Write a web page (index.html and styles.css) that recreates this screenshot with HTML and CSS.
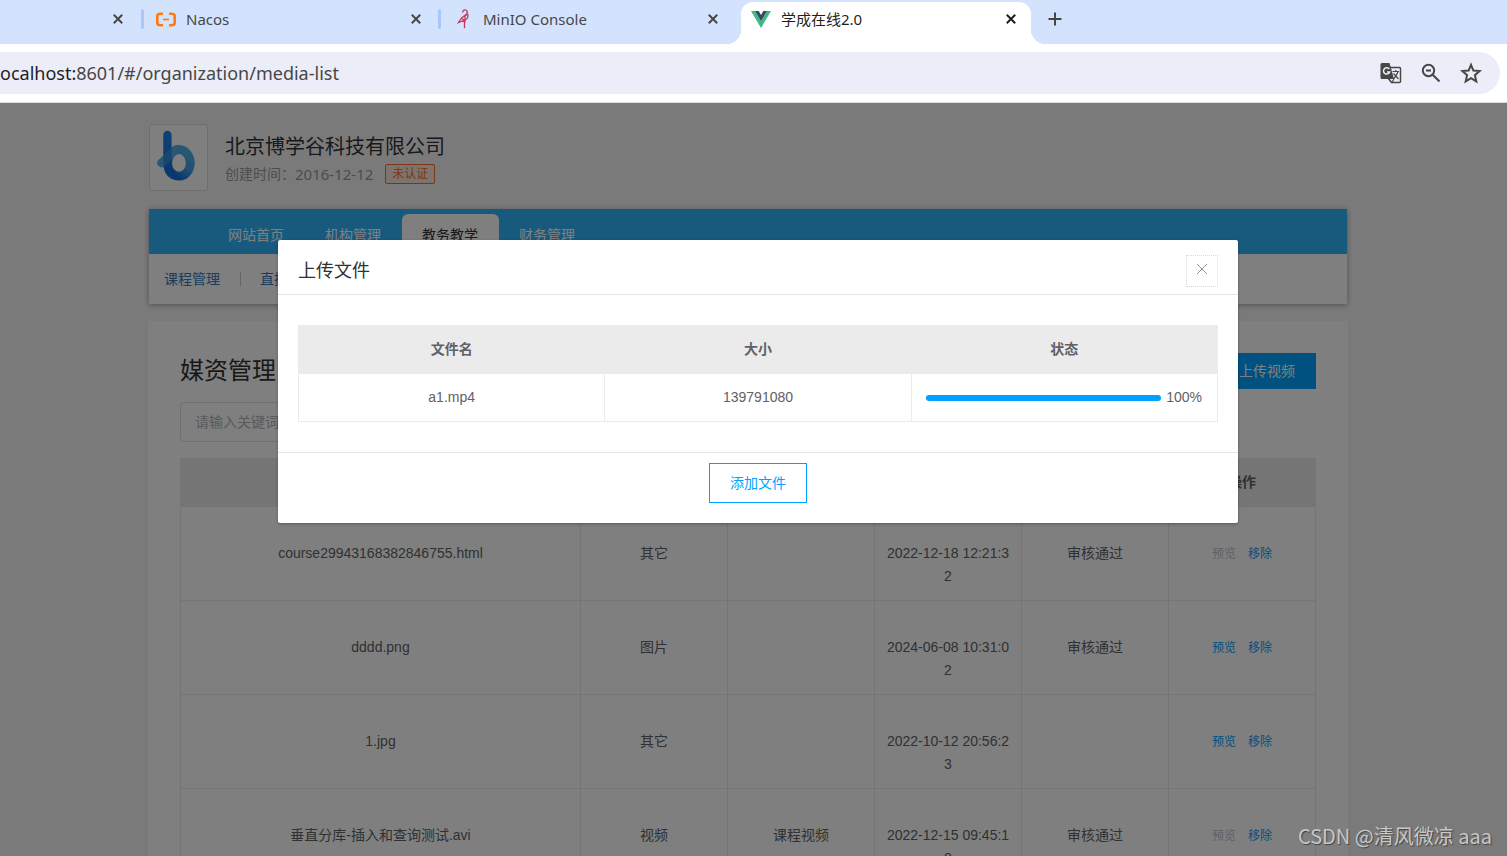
FILE: index.html
```html
<!DOCTYPE html>
<html lang="zh-CN">
<head>
<meta charset="utf-8">
<title>学成在线2.0</title>
<link rel="stylesheet" href="styles.css">
</head>
<body>
<header class="browser">
  <div class="tabs">
    <div class="tab tab-cut"><button class="tab-close" aria-label="关闭"><svg viewBox="0 0 10 10"><path d="M0.8 0.8 9.2 9.2M9.2 0.8 0.8 9.2"/></svg></button></div>
    <div class="tab">
      <svg class="favicon wide" viewBox="0 0 20 14"><path d="M7 1.300H4.500Q1.300 1.300 1.300 3.500v7Q1.300 12.700 4.500 12.700H7M13 1.300h2.500q3.200 0 3.200 2.200v7q0 2.200-3.200 2.200H13" fill="none" stroke="#ff7a0f" stroke-width="2.600"/><path d="M7 7h6" stroke="#ff7a0f" stroke-width="1.600"/></svg>
      <span class="tab-title">Nacos</span>
      <button class="tab-close" aria-label="关闭"><svg viewBox="0 0 10 10"><path d="M0.8 0.8 9.2 9.2M9.2 0.8 0.8 9.2"/></svg></button>
    </div>
    <div class="tab">
      <svg class="favicon" viewBox="0 0 16 20"><path d="M7.500 3.500Q8.500-.2 11.500 1.500q2 2-.8 4.200L6.500 9l3.500 3V6.500l2.800-1Q13.500 9 11 10.500L3.500 13.500 6.500 9M9.500 11v8.200" fill="none" stroke="#c9375c" stroke-width="1.300"/></svg>
      <span class="tab-title">MinIO Console</span>
      <button class="tab-close" aria-label="关闭"><svg viewBox="0 0 10 10"><path d="M0.8 0.8 9.2 9.2M9.2 0.8 0.8 9.2"/></svg></button>
    </div>
    <div class="tab tab-active">
      <svg class="favicon wide" viewBox="0 0 20 17"><path d="M0 0h4l6 10.300L16 0h4L10 17z" fill="#41b883"/><path d="M4 0h3.700L10 4l2.300-4H16l-6 10.300z" fill="#34495e"/></svg>
      <span class="tab-title">学成在线2.0</span>
      <button class="tab-close" aria-label="关闭"><svg viewBox="0 0 10 10"><path d="M0.8 0.8 9.2 9.2M9.2 0.8 0.8 9.2"/></svg></button>
    </div>
    <button class="tab-new" aria-label="新标签页"><svg viewBox="0 0 14 14"><path d="M7 .5v13M.5 7h13"/></svg></button>
  </div>
  <div class="toolbar">
    <div class="omnibox">
      <span class="url"><b>ocalhost:</b>8601/#/organization/media-list</span>
      <button aria-label="翻译"><svg viewBox="0 0 22 22"><path d="M10 5.500h9.500q1 0 1 1v13q0 1-1 1h-8L8 16" fill="none" stroke="#474747" stroke-width="1.500"/><path d="M2 1h7.500l4.500 16H2q-1.500 0-1.500-1.500v-13Q.5 1 2 1z" fill="#474747"/><path d="M9.300 7A3.200 3.200 0 1 0 9.700 10H7" fill="none" stroke="#ebedf8" stroke-width="1.500"/><path d="M12.500 9.500h6.500M15.700 8v1.500M18 9.500q-1.500 5-4.500 7.500M13.500 11.500l5 5.500M11.500 21l2.500-4" fill="none" stroke="#474747" stroke-width="1.200"/></svg></button>
      <button aria-label="缩小"><svg viewBox="0 0 22 22"><circle cx="8.500" cy="8.500" r="5.700" fill="none" stroke="#474747" stroke-width="2"/><path d="M6 8.500h5M12.700 12.700l6.800 6.800" stroke="#474747" stroke-width="2"/></svg></button>
      <button aria-label="收藏"><svg viewBox="0 0 22 22"><path d="M11 2.800 13.400 8.600l6.200.5-4.700 4.100 1.400 6.100-5.300-3.200-5.300 3.200 1.400-6.100L2.400 9.100l6.200-.5z" fill="none" stroke="#474747" stroke-width="2"/></svg></button>
    </div>
  </div>
</header>

<div class="viewport">
  <main class="page">
    <section class="org">
      <svg class="org-logo" viewBox="0 0 58 66" role="img" aria-label="logo">
        <defs>
          <linearGradient id="g1" x1="0" y1="0" x2="0" y2="1"><stop offset="0" stop-color="#1c86e6"/><stop offset="1" stop-color="#0f6fdc"/></linearGradient>
          <linearGradient id="g2" gradientUnits="userSpaceOnUse" x1="40" y1="30" x2="26" y2="52"><stop offset="0" stop-color="#4fb0e4"/><stop offset=".5" stop-color="#41a0e2"/><stop offset="1" stop-color="#0f6fdc"/></linearGradient>
        </defs>
        <ellipse cx="29.500" cy="38.500" rx="11.500" ry="13.500" fill="none" stroke="url(#g2)" stroke-width="9"/>
        <path d="M13.500 10a4.200 4.200 0 0 1 8.500 0V38.500Q22 46 26 48L22 55Q13.500 50 13.500 38z" fill="url(#g1)"/>
        <path d="M8 36 21 24Q25 20 30 20V29.500Q26 29.500 23 33.500L14 42.500A4.600 4.600 0 0 1 8 36z" fill="#58aee4"/>
        <path d="M13.500 31 21 24 22 23.200V34.500L14 42.500 13.500 42.800z" fill="#2f8fdc"/>
      </svg>
      <div class="org-info">
        <h2>北京博学谷科技有限公司</h2>
        <p>创建时间：<time>2016-12-12</time><span class="tag">未认证</span></p>
      </div>
    </section>
    <nav class="nav">
      <div class="nav-main"><a href="#">网站首页</a><a href="#">机构管理</a><a href="#" class="on">教务教学</a><a href="#">财务管理</a></div>
      <div class="nav-sub"><a href="#">课程管理</a><a href="#">直播</a></div>
    </nav>
    <section class="card">
      <div class="card-head"><h1>媒资管理</h1><button class="primary">上传视频</button></div>
      <input class="search" type="text" placeholder="请输入关键词" aria-label="请输入关键词">
      <table class="grid media">
        <colgroup><col class="col-name"><col><col><col><col><col></colgroup>
        <thead><tr><th></th><th></th><th></th><th></th><th></th><th>操作</th></tr></thead>
        <tbody>
          <tr><td>course29943168382846755.html</td><td>其它</td><td></td><td class="date">2022-12-18 12:21:32</td><td>审核通过</td><td class="ops"><a class="off">预览</a><a href="#">移除</a></td></tr>
          <tr><td>dddd.png</td><td>图片</td><td></td><td class="date">2024-06-08 10:31:02</td><td>审核通过</td><td class="ops"><a href="#">预览</a><a href="#">移除</a></td></tr>
          <tr><td>1.jpg</td><td>其它</td><td></td><td class="date">2022-10-12 20:56:23</td><td></td><td class="ops"><a href="#">预览</a><a href="#">移除</a></td></tr>
          <tr><td>垂直分库-插入和查询测试.avi</td><td>视频</td><td>课程视频</td><td class="date">2022-12-15 09:45:18</td><td>审核通过</td><td class="ops"><a class="off">预览</a><a href="#">移除</a></td></tr>
        </tbody>
      </table>
    </section>
  </main>
  <div class="mask">
    <div class="dialog" role="dialog" aria-labelledby="dlg-title">
      <div class="dialog-head"><h3 id="dlg-title">上传文件</h3><button class="close" aria-label="关闭"><svg viewBox="0 0 12 12"><path d="M1 1 11 11M11 1 1 11"/></svg></button></div>
      <div class="dialog-body">
        <table class="grid">
          <thead><tr><th>文件名</th><th>大小</th><th>状态</th></tr></thead>
          <tbody><tr><td>a1.mp4</td><td>139791080</td><td><div class="progress"><div class="track"><div class="bar" style="width:100%"></div></div><span>100%</span></div></td></tr></tbody>
        </table>
      </div>
      <div class="dialog-foot"><button class="outline">添加文件</button></div>
    </div>
  </div>
  <div class="watermark">CSDN @清风微凉 aaa</div>
</div>
</body>
</html>
```
FILE: styles.css
```css
* { box-sizing: border-box; }
body {
  margin: 0;
  height: 100vh;
  display: flex;
  flex-direction: column;
  overflow: hidden;
  font: 14px/23px "Liberation Sans", "Noto Sans CJK SC", sans-serif;
  color: #606266;
}
h1, h2, h3, p { margin: 0; font-weight: 400; }
button, input { font: inherit; }
button { padding: 0; border: 0; background: none; cursor: pointer; }
a { text-decoration: none; color: inherit; }
svg { display: block; }

/* browser frame */
.browser { flex: none; font-family: "Noto Sans", "Noto Sans CJK SC", sans-serif; background: #fff; border-bottom: 1px solid #dcdcdc; }
.tabs { display: flex; height: 44px; background: #d3e3fd; }
.tab { position: relative; display: flex; align-items: center; gap: 10px; flex: none; width: 297px; height: 38px; padding: 0 19px 0 13px; font-size: 15px; color: #474747; }
.tab + .tab:not(.tab-active)::before { content: ""; position: absolute; left: -2px; top: 9px; width: 3px; height: 20px; border-radius: 2px; background: #a8c7fa; }
.tab-cut { width: 143px; padding-right: 20px; }
.tab-title { flex: 1; }
.favicon { width: 20px; height: 20px; }
.favicon.wide { height: 17px; }
.tab-close { margin-left: auto; color: #474747; }
.tab-close svg { width: 10px; height: 10px; fill: none; stroke: currentColor; stroke-width: 2; }
.tab-active { width: 290px; height: 42px; margin: 2px 0 0 4px; padding: 0 15px 8px 10px; border-radius: 12px 12px 0 0; background: #fff; color: #1f1f1f; }
.tab-active .tab-close { color: #1f1f1f; }
.tab-active::before, .tab-active::after { content: ""; position: absolute; bottom: 0; width: 14px; height: 14px; }
.tab-active::before { right: 100%; background: radial-gradient(circle at 0 0, transparent 14px, #fff 14px); }
.tab-active::after { left: 100%; background: radial-gradient(circle at 100% 0, transparent 14px, #fff 14px); }
.tab-new { height: 38px; padding-left: 17px; }
.tab-new svg { width: 14px; height: 14px; fill: none; stroke: #474747; stroke-width: 2; }
.toolbar { padding: 8px 7px 8px 0; }
.omnibox { display: flex; align-items: center; gap: 18px; height: 42px; padding-right: 18px; border-radius: 0 21px 21px 0; background: #ebedf8; }
.url { flex: 1; font-size: 18px; color: #474747; }
.url b { font-weight: 400; color: #1f1f1f; }
.omnibox svg { width: 22px; height: 22px; }

/* page */
.viewport { position: relative; flex: 1; min-height: 0; overflow: hidden; background: #f5f5f5; }
.page { max-width: 1211px; margin: 0 auto; padding: 21px 11px 0 0; }
.org { display: flex; gap: 17px; margin-left: 1px; }
.org-logo { width: 59px; height: 67px; border: 1px solid #dcdcdc; border-radius: 3px; background: #fff; }
.org-info { padding-top: 9px; }
.org h2 { font-size: 20px; line-height: 28px; color: #333; }
.org p { display: flex; align-items: center; line-height: 26px; color: #999; }
.org time { font: 15px/26px "Noto Sans", sans-serif; }
.tag { margin-left: 12px; padding: 0 6px; border: 1px solid #ff6a1a; border-radius: 2px; background: #fbe9df; font-size: 12px; line-height: 18px; color: #ff6a1a; }
.nav { margin: 18px 1px 0; background: #fff; box-shadow: 0 1px 6px rgba(0, 0, 0, .35); }
.nav-main { display: flex; align-items: flex-end; height: 45px; padding-left: 59px; background: #2eb4fc; color: #fff; }
.nav-main a { height: 40px; padding: 0 20px; border-right: 1px solid transparent; line-height: 42px; }
.nav-main .on { border-radius: 6px 6px 0 0; background: #fff; color: #333; }
.nav-sub { display: flex; align-items: center; height: 50px; padding-left: 15px; color: #337ab7; }
.nav-sub a { display: flex; align-items: center; }
.nav-sub a + a::before { content: ""; height: 14px; margin: 0 19px 0 20px; border-left: 1px solid #ccc; }
.card { margin-top: 17px; padding: 32px; background: #fff; }
.card-head { display: flex; align-items: center; justify-content: space-between; height: 36px; }
.card h1 { font-size: 24px; line-height: 36px; color: #333; }
.primary { height: 36px; padding: 0 21px; background: #00a2ff; color: #fff; }
.search { display: block; width: 240px; height: 40px; margin: 13px 0 16px; padding: 0 14px; border: 1px solid #dcdfe6; border-radius: 4px; background: #fff; }
.search::placeholder { color: #b0b3ba; opacity: 1; }

/* tables */
.grid { width: 100%; table-layout: fixed; border-collapse: collapse; text-align: center; word-break: break-all; }
.grid th { height: 48px; padding: 0 10px; border: 1px solid #ebebeb; background: #ebebeb; font-weight: 700; }
.grid td { height: 48px; padding: 12px 10px; border: 1px solid #ebebeb; }
.media { color: #606266; }
.media .col-name { width: 400px; }
.media td { height: 94px; }
.media .date { padding-top: 35px; }
.ops a { font-size: 12px; color: #00a2ff; }
.ops a + a { margin-left: 12px; }
.ops .off { color: #c0c4cc; }

/* dialog */
.mask { position: absolute; inset: 0; padding: 137px 0 0 9px; background: rgba(0, 0, 0, .5); }
.dialog { width: 100%; max-width: 960px; margin: 0 auto; border-radius: 2px; background: #fff; box-shadow: 0 1px 3px rgba(0, 0, 0, .3); }
.dialog-head { display: flex; justify-content: space-between; align-items: center; height: 55px; padding: 8px 20px 0; border-bottom: 1px solid #e4e4ec; }
.dialog-head h3 { font-size: 18px; line-height: 24px; color: #303133; }
.close { display: grid; place-items: center; width: 32px; height: 32px; padding-bottom: 4px; border: 1px dotted #d8dbe2; }
.close svg { width: 12px; height: 12px; stroke: #909399; }
.dialog-body { padding: 30px 20px; }
.progress { display: flex; align-items: center; gap: 5px; padding: 0 5px 0 4px; }
.track { flex: 1; height: 6px; border-radius: 3px; background: #ebeef5; }
.bar { height: 100%; border-radius: 3px; background: #00a2ff; }
.dialog-foot { display: flex; justify-content: center; padding: 10px 20px 20px; border-top: 1px solid #e4e4ec; }
.outline { height: 40px; padding: 0 20px; border: 1px solid #00a2ff; color: #00a2ff; }
.watermark { position: absolute; right: 15px; bottom: 6px; font: 20px/28px "Noto Sans CJK SC", sans-serif; color: #c8c8c8; text-shadow: 1px 1px 1px #444; }
```
